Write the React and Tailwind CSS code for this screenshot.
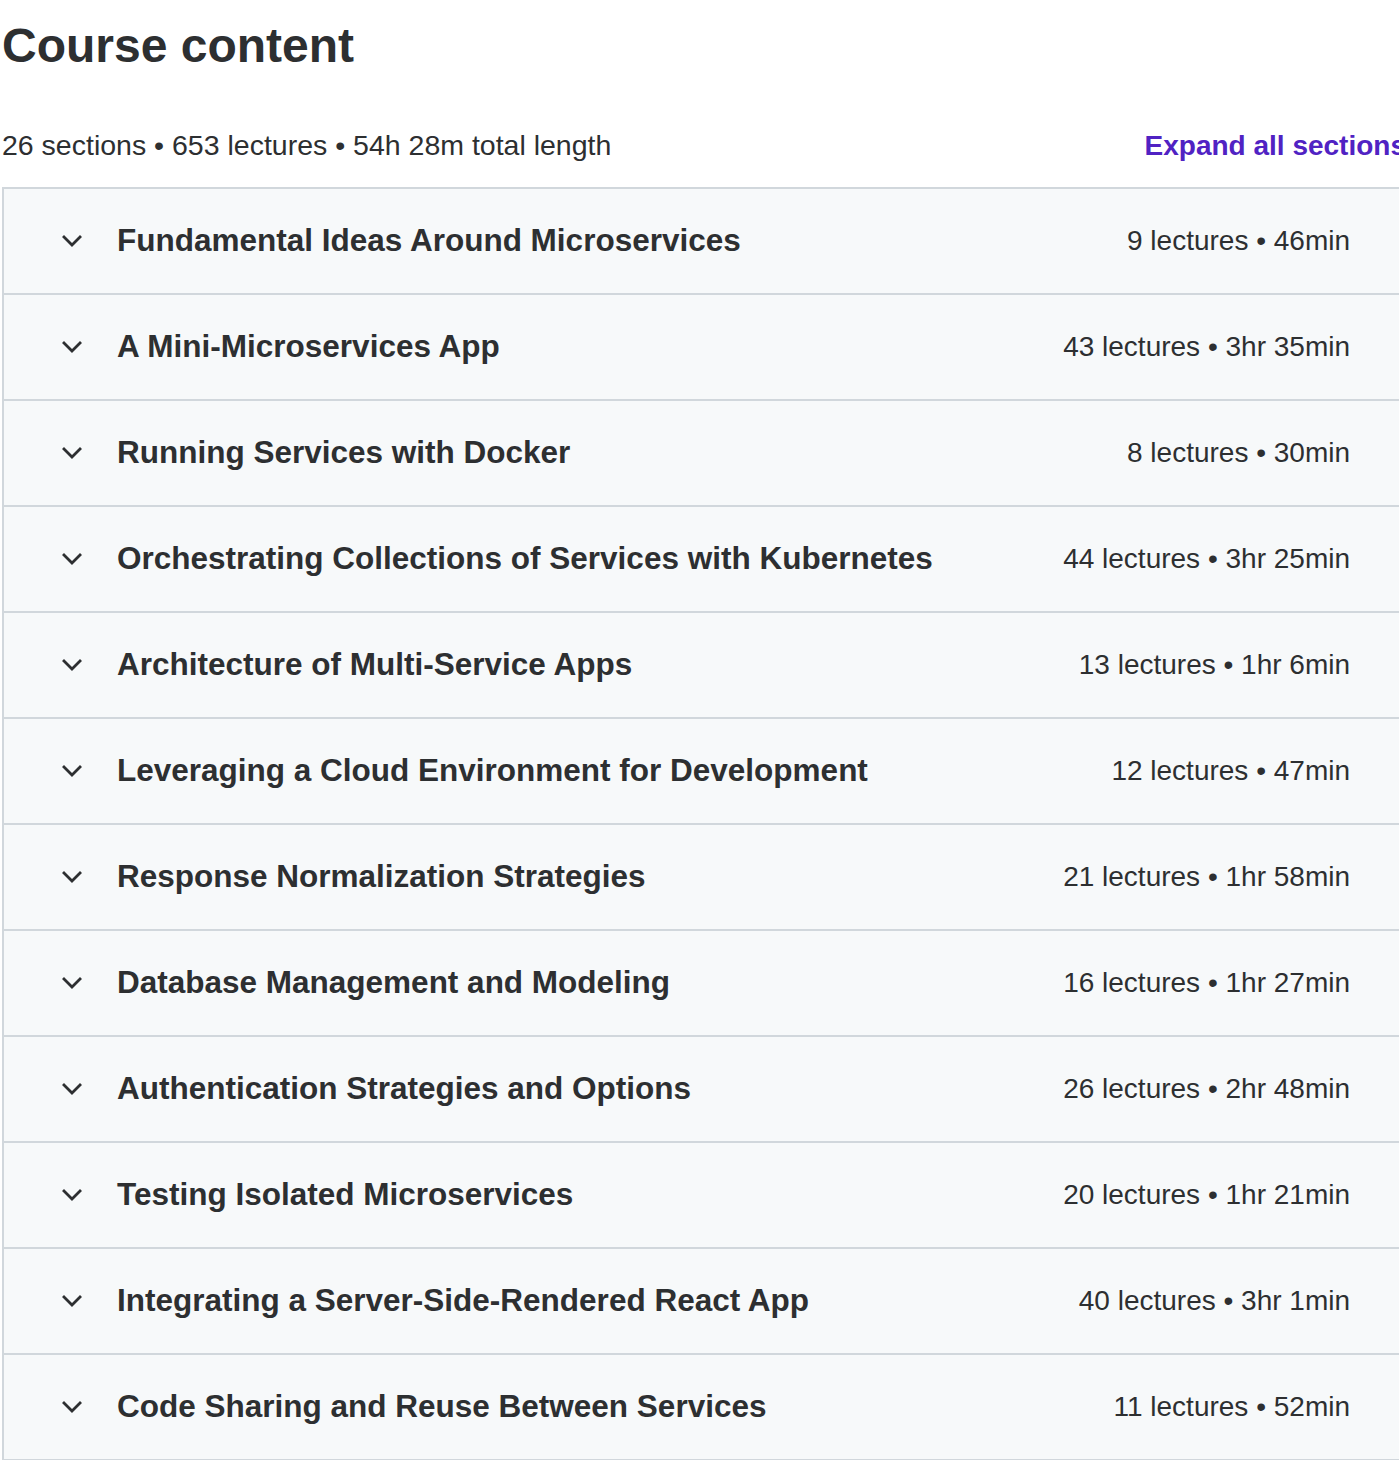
const sections = [
  { title: 'Fundamental Ideas Around Microservices', meta: '9 lectures • 46min' },
  { title: 'A Mini-Microservices App', meta: '43 lectures • 3hr 35min' },
  { title: 'Running Services with Docker', meta: '8 lectures • 30min' },
  { title: 'Orchestrating Collections of Services with Kubernetes', meta: '44 lectures • 3hr 25min' },
  { title: 'Architecture of Multi-Service Apps', meta: '13 lectures • 1hr 6min' },
  { title: 'Leveraging a Cloud Environment for Development', meta: '12 lectures • 47min' },
  { title: 'Response Normalization Strategies', meta: '21 lectures • 1hr 58min' },
  { title: 'Database Management and Modeling', meta: '16 lectures • 1hr 27min' },
  { title: 'Authentication Strategies and Options', meta: '26 lectures • 2hr 48min' },
  { title: 'Testing Isolated Microservices', meta: '20 lectures • 1hr 21min' },
  { title: 'Integrating a Server-Side-Rendered React App', meta: '40 lectures • 3hr 1min' },
  { title: 'Code Sharing and Reuse Between Services', meta: '11 lectures • 52min' },
]

// ── Chevron ───────────────────────────────────────────────────────────────────

function Chevron() {
  return (
    <svg width="20" height="12" viewBox="0 0 20 12" className="shrink-0" aria-hidden="true">
      <path d="M2 2 L10 10 L18 2" fill="none" stroke="#2d2f31" strokeWidth="2.8" strokeLinecap="square" />
    </svg>
  )
}

// ── Page ──────────────────────────────────────────────────────────────────────

export default function App() {
  return (
    <div
      className="w-full overflow-hidden bg-white text-[#2d2f31]"
      style={{ fontFamily: '"Liberation Sans", Arial, sans-serif' }}
    >
      <div className="ml-[2px] w-[1404px]">
        <h2 className="pt-[17px] text-[48px] font-bold leading-[58px]">Course content</h2>

        <div className="mt-[50px] flex items-baseline justify-between pb-[21px] leading-[40px]">
          <span className="text-[28.5px]">26 sections • 653 lectures • 54h 28m total length</span>
          <button type="button" className="text-[28px] font-bold text-[#5022c3]">
            Expand all sections
          </button>
        </div>

        <div className="border-2 border-[#d1d7dc] bg-[#f7f9fa]">
          {sections.map((s, i) => (
            <div
              key={s.title}
              className={`box-content flex h-[104px] items-center pl-[58px] pr-[54px] ${i > 0 ? 'border-t-2 border-[#d1d7dc]' : ''}`}
            >
              <Chevron />
              <span className="ml-[35px] flex-1 text-[31.5px] font-bold leading-[1.2]">{s.title}</span>
              <span className="text-[28px] leading-[1.2]">{s.meta}</span>
            </div>
          ))}
        </div>
      </div>
    </div>
  )
}
